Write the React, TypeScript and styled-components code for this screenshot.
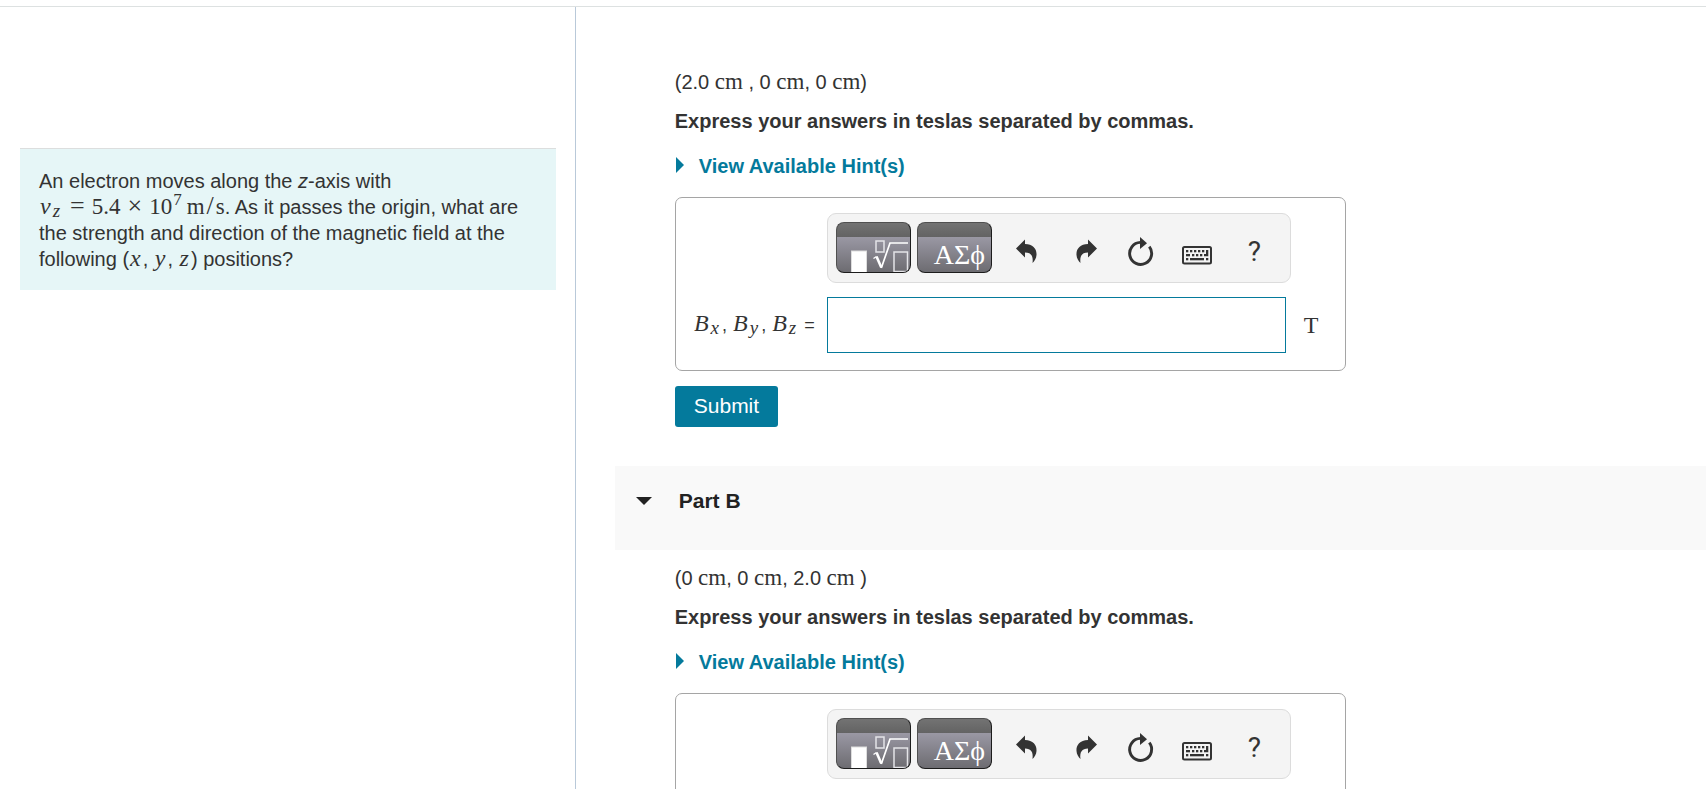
import React from "react";
import styled, { createGlobalStyle } from "styled-components";

const GlobalStyle = createGlobalStyle`
  * { box-sizing: border-box; }
  body {
    margin: 0;
    background: #fff;
    color: #333;
    font-family: "Liberation Sans", Arial, sans-serif;
    font-size: 20px;
    line-height: 24px;
  }
  button, input { font: inherit; color: inherit; }
  p { margin: 0; }
`;

const Page = styled.div`
  display: flex;
  flex-direction: column;
  height: 100vh;
  padding-top: 6px;
`;

const Split = styled.div`
  flex: 1;
  min-height: 0;
  display: grid;
  grid-template-columns: minmax(0, 27fr) minmax(0, 53fr);
  border-top: 1px solid #dde1e1;
`;

const ProblemPane = styled.aside`
  border-right: 1px solid #b9c9d9;
  padding: 141px 19px 20px 20px;
`;

const ProblemCard = styled.section`
  background: #e6f6f7;
  border-top: 1px solid #dcdede;
  padding: 19px 19px 18px;
  line-height: 26px;
`;

const PartsPane = styled.main`
  overflow-y: auto;
  scrollbar-width: none;
  padding: 47px 0 40px 39px;
`;

const PartHeader = styled.h2`
  margin: 39px 0 0;
  height: 84px;
  padding: 23px 21px 0;
  background: #f9f9f9;
  font-size: 21px;
  line-height: 24px;
`;

const PartToggle = styled.button`
  display: flex;
  align-items: center;
  gap: 27px;
  padding: 0;
  border: 0;
  background: none;
  font-weight: bold;
  color: #222;
`;

const PartBody = styled.section`
  max-width: 731px;
  padding: 16px 0 0 60px;
`;

const Instruction = styled.p`
  margin-top: 15px;
  font-weight: bold;
`;

const HintButton = styled.button`
  display: flex;
  align-items: center;
  gap: 14px;
  margin: 21px 0 19px;
  padding: 0;
  border: 0;
  background: none;
  color: #047a9c;
  font-weight: bold;
`;

const AnswerBox = styled.div`
  display: grid;
  grid-template-columns: minmax(0, 1fr) 464px 54px;
  row-gap: 14px;
  align-items: center;
  padding: 15px 0 17px;
  border: 1px solid #a5a5a5;
  border-radius: 7px;
`;

const Toolbar = styled.div`
  grid-column: 2;
  display: flex;
  height: 70px;
  padding: 8px 4px 8px 8px;
  background: #f4f4f4;
  border: 1px solid #dcdcdc;
  border-radius: 9px;
`;

const PaletteButton = styled.button`
  display: block;
  flex: none;
  width: 75px;
  height: 51px;
  margin-right: 6px;
  padding: 0;
  overflow: hidden;
  border: 1px solid #1c1c1c;
  border-top-color: #505050;
  border-left-color: #505050;
  border-radius: 8px;
  color: #fff;
  background:
    linear-gradient(#737373, #636363) top / 100% 14px no-repeat,
    linear-gradient(#9a98a4 14px, #6d6c71);
  svg { display: block; }
`;

const GreekText = styled.span`
  display: block;
  padding: 15px 0 0 16px;
  text-align: left;
  font-family: "Liberation Serif", serif;
  font-size: 28px;
  line-height: 34px;
  white-space: nowrap;
`;

const ToolButton = styled.button`
  flex: none;
  width: 57px;
  height: 51px;
  padding: 0;
  border: 0;
  background: none;
  color: #333;
  svg { display: block; }
`;

const HelpMark = styled.span`
  display: block;
  padding-top: 8px;
  font-family: Roboto, sans-serif;
  font-size: 28px;
  line-height: 43px;
`;

const AnswerLabel = styled.label`
  grid-column: 1;
  padding-right: 12px;
  text-align: right;
  white-space: nowrap;
  font-size: 18px;
`;

const AnswerInput = styled.input`
  width: 459px;
  height: 56px;
  padding: 0 10px;
  border: 1px solid #047a9c;
  background: #fff;
  outline: none;
`;

const Unit = styled.span`
  padding-left: 13px;
  font-family: "Liberation Serif", serif;
  font-size: 24px;
`;

const SubmitButton = styled.button`
  display: block;
  height: 41px;
  margin-top: 15px;
  padding: 0 19px 2px;
  border: 0;
  border-radius: 3px;
  background: #047a9c;
  color: #fff;
  font-size: 21px;
`;

const Roman = styled.span`
  font-family: "Liberation Serif", serif;
  font-size: 23px;
  line-height: 1px;
`;

const Operator = styled.span`
  margin: 0 7px;
  font-size: 26px;
`;

const Slash = styled.span`
  margin: 0 2px;
  font-size: 26px;
`;

const Variable = styled.i`
  margin: 0 2px 0 1px;
  font-family: "Liberation Serif", serif;
  font-size: 24px;
  line-height: 1px;
`;

const Sub = styled.sub`
  margin-right: 3px;
  font-family: "Liberation Serif", serif;
  font-style: italic;
  font-size: 19px;
  line-height: 1px;
  vertical-align: -3px;
`;

const Sup = styled.sup`
  margin: 0 5px 0 1px;
  font-size: 17px;
  line-height: 1px;
  vertical-align: 9px;
`;

function SqrtIcon() {
  return (
    <svg width="74" height="50" viewBox="1 1 74 50" fill="none" stroke="#fff" aria-hidden="true">
      <rect x="15.5" y="29" width="15" height="24" fill="#fff" stroke="#ddd" />
      <rect x="40" y="19" width="8" height="11" stroke="#e4e4e8" strokeWidth="1.5" />
      <path d="M37.5 36.5 40.5 34.5" strokeWidth="1.4" />
      <path d="M40.5 34.5 45.3 45.5" strokeWidth="2.6" />
      <path d="M45.3 46 54 21H72" strokeWidth="1.7" />
      <rect x="58" y="30" width="13.5" height="19.5" stroke="#e4e4e8" strokeWidth="1.5" />
    </svg>
  );
}

const ARROW = "M18 26.5 27 17.5V22C35 22 39 27 38.5 33 38.3 36.5 36.5 39 34.5 41 35.5 34 33 30.5 27 30.5V35.5Z";

function UndoIcon() {
  return (
    <svg width="57" height="51" fill="currentColor" aria-hidden="true">
      <path d={ARROW} />
    </svg>
  );
}

function RedoIcon() {
  return (
    <svg width="57" height="51" fill="currentColor" aria-hidden="true">
      <path d={ARROW} transform="translate(60 0) scale(-1 1)" />
    </svg>
  );
}

function ResetIcon() {
  return (
    <svg width="57" height="51" aria-hidden="true">
      <path d="M37.3 24.6A11 11 0 1 1 28.3 20.4" fill="none" stroke="currentColor" strokeWidth="2.9" />
      <path d="M28 15 35 21.3 28 27Z" fill="currentColor" />
    </svg>
  );
}

function KeyboardIcon() {
  return (
    <svg width="57" height="51" fill="currentColor" aria-hidden="true">
      <rect x="14" y="25" width="28" height="16.5" rx="1.5" fill="none" stroke="currentColor" strokeWidth="2" />
      {[17, 21, 25, 29, 33].map((x) => (
        <rect key={x} x={x} y="28" width="2.3" height="2.3" />
      ))}
      <rect x="17" y="32" width="4" height="2.3" />
      {[23, 27, 31].map((x) => (
        <rect key={x} x={x} y="32" width="2.3" height="2.3" />
      ))}
      <path d="M37 28h2.3v6.3H35V32h2Z" />
      <rect x="17" y="36" width="2.3" height="2.3" />
      <rect x="21" y="36" width="14" height="2.3" />
      <rect x="37" y="36" width="2.3" height="2.3" />
    </svg>
  );
}

function Component({ axis }: { axis: string }) {
  return (
    <>
      <Variable>B</Variable>
      <Sub>{axis}</Sub>
    </>
  );
}

function AnswerForm({ id }: { id: string }) {
  return (
    <form onSubmit={(e) => e.preventDefault()}>
      <AnswerBox>
        <Toolbar role="toolbar" aria-label="Equation tools">
          <PaletteButton type="button" aria-label="Templates">
            <SqrtIcon />
          </PaletteButton>
          <PaletteButton type="button" aria-label="Symbols">
            <GreekText>ΑΣϕ</GreekText>
          </PaletteButton>
          <ToolButton type="button" aria-label="Undo"><UndoIcon /></ToolButton>
          <ToolButton type="button" aria-label="Redo"><RedoIcon /></ToolButton>
          <ToolButton type="button" aria-label="Reset"><ResetIcon /></ToolButton>
          <ToolButton type="button" aria-label="Keyboard shortcuts"><KeyboardIcon /></ToolButton>
          <ToolButton type="button" aria-label="Help"><HelpMark>?</HelpMark></ToolButton>
        </Toolbar>
        <AnswerLabel htmlFor={id}>
          <Component axis="x" />, <Component axis="y" />, <Component axis="z" /> =
        </AnswerLabel>
        <AnswerInput id={id} type="text" autoComplete="off" />
        <Unit>T</Unit>
      </AnswerBox>
      <SubmitButton type="submit">Submit</SubmitButton>
    </form>
  );
}

function Part({ id, children }: { id: string; children: React.ReactNode }) {
  return (
    <PartBody>
      <p>{children}</p>
      <Instruction>Express your answers in teslas separated by commas.</Instruction>
      <HintButton type="button">
        <svg width="10" height="24" aria-hidden="true">
          <path d="M1 3 9 11 1 19Z" fill="currentColor" />
        </svg>
        View Available Hint(s)
      </HintButton>
      <AnswerForm id={id} />
    </PartBody>
  );
}

export default function App() {
  return (
    <>
      <GlobalStyle />
      <Page>
        <Split>
          <ProblemPane>
            <ProblemCard>
              <p>
                An electron moves along the <em>z</em>-axis with
                <br />
                <Variable>v</Variable>
                <Sub>z</Sub>
                <Roman>
                  <Operator>=</Operator>5.4<Operator>×</Operator>10<Sup>7</Sup>m<Slash>/</Slash>s
                </Roman>
                . As it passes the origin, what are
                the strength and direction of the magnetic field at the
                following (<Variable>x</Variable>, <Variable>y</Variable>, <Variable>z</Variable>) positions?
              </p>
            </ProblemCard>
          </ProblemPane>
          <PartsPane>
            <Part id="answer-a">
              (2.0 <Roman>cm</Roman> , 0 <Roman>cm</Roman>, 0 <Roman>cm</Roman>)
            </Part>
            <PartHeader>
              <PartToggle type="button" aria-expanded="true">
                <svg width="16" height="24" aria-hidden="true">
                  <path d="M0 8H16L8 16Z" fill="currentColor" />
                </svg>
                Part B
              </PartToggle>
            </PartHeader>
            <Part id="answer-b">
              (0 <Roman>cm</Roman>, 0 <Roman>cm</Roman>, 2.0 <Roman>cm</Roman> )
            </Part>
          </PartsPane>
        </Split>
      </Page>
    </>
  );
}
